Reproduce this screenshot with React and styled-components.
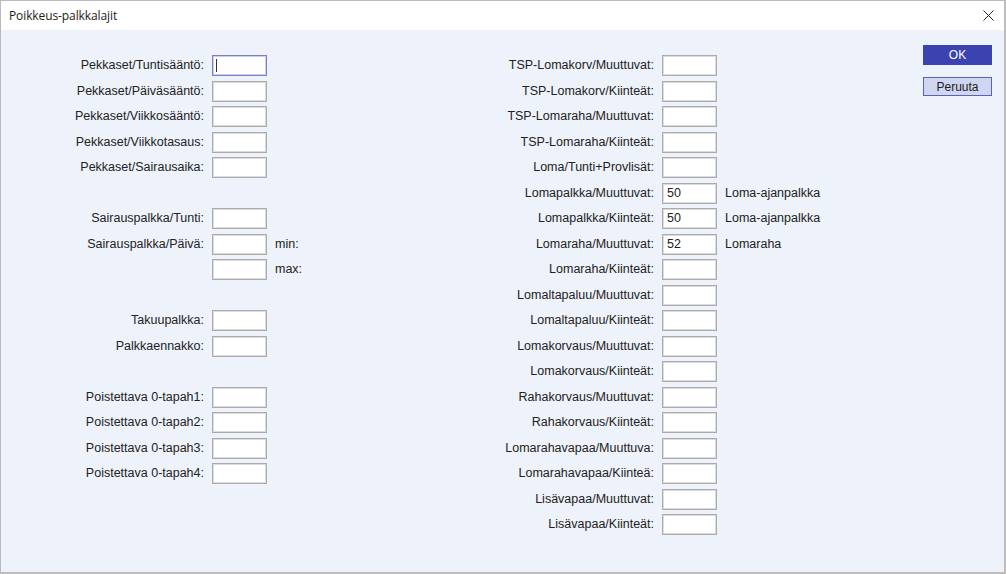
import React from "react";
import styled, { createGlobalStyle } from "styled-components";

const Global = createGlobalStyle`
  html, body { margin: 0; padding: 0; }
  body { width: 1006px; height: 574px; overflow: hidden; background: #ffffff; }
  #root { width: 1006px; height: 574px; }
`;

const Window = styled.div`
  box-sizing: border-box;
  width: 1006px;
  height: 574px;
  display: flex;
  flex-direction: column;
  border-top: 1px solid #b9b9b9;
  border-left: 1px solid #b9b9b9;
  border-right: 2px solid #bdbdbd;
  border-bottom: 2px solid #bdbdbd;
  font-family: "Liberation Sans", Arial, sans-serif;
`;

const TitleBar = styled.div`
  height: 29px;
  flex: none;
  background: #ffffff;
  display: flex;
  align-items: center;
  justify-content: space-between;
  padding: 0 9px 0 8px;
`;

const Title = styled.span`
  font-family: "Open Sans", "Noto Sans", sans-serif;
  font-size: 12px;
  color: #1b1b1b;
  letter-spacing: -0.1px;
`;

const Close = styled.button`
  border: 0;
  background: transparent;
  padding: 0;
  width: 14px;
  height: 14px;
  display: flex;
  align-items: center;
  justify-content: center;
`;

const Body = styled.div`
  flex: 1;
  background: #eef2fa;
  display: flex;
  padding-top: 25px;
`;

const Form = styled.div`
  display: grid;
  grid-template-columns: ${(p) => p.$label}px 55px auto;
  grid-auto-rows: 21px;
  row-gap: 4.5px;
  column-gap: ${(p) => p.$gap}px;
  align-content: start;
  width: ${(p) => p.$width}px;
  margin-left: ${(p) => p.$left}px;
`;

const Label = styled.label`
  grid-column: 1;
  text-align: right;
  font-size: 12.5px;
  color: #222;
  line-height: 21px;
  white-space: nowrap;
`;

const Field = styled.div`
  grid-column: 2;
  box-sizing: border-box;
  height: 21px;
  background: #ffffff;
  border: 1px solid ${(p) => (p.$focus ? "#7780c9" : "#ababab")};
  box-shadow: inset 0 0 0 1px ${(p) => (p.$focus ? "#c9cdee" : "#dcdcdc")};
  font-size: 12.5px;
  color: #222;
  line-height: 19px;
  padding-left: 4px;
  position: relative;
`;

const Caret = styled.span`
  position: absolute;
  left: 3px;
  top: 3px;
  width: 1px;
  height: 13px;
  background: #333;
`;

const Suffix = styled.span`
  grid-column: 3;
  font-size: 12.5px;
  color: #222;
  line-height: 21px;
  white-space: nowrap;
`;

const Spacer = styled.div`
  grid-column: 1 / span 3;
`;

const Buttons = styled.div`
  margin-left: auto;
  margin-right: 12px;
  display: flex;
  flex-direction: column;
  gap: 12px;
  margin-top: -10px;
`;

const Button = styled.button`
  box-sizing: border-box;
  width: 69px;
  height: ${(p) => (p.$primary ? 20 : 19)}px;
  padding: 0;
  font-family: "Liberation Sans", Arial, sans-serif;
  font-size: 12px;
  color: ${(p) => (p.$primary ? "#ffffff" : "#1b1b1b")};
  background: ${(p) => (p.$primary ? "#3a43b0" : "#cfd6f1")};
  border: 1px solid ${(p) => (p.$primary ? "#3a43b0" : "#5962b8")};
`;

const leftRows = [
  { l: "Pekkaset/Tuntisääntö:", focus: true },
  { l: "Pekkaset/Päiväsääntö:" },
  { l: "Pekkaset/Viikkosääntö:" },
  { l: "Pekkaset/Viikkotasaus:" },
  { l: "Pekkaset/Sairausaika:" },
  null,
  { l: "Sairauspalkka/Tunti:" },
  { l: "Sairauspalkka/Päivä:", s: "min:" },
  { l: "", s: "max:" },
  null,
  { l: "Takuupalkka:" },
  { l: "Palkkaennakko:" },
  null,
  { l: "Poistettava 0-tapah1:" },
  { l: "Poistettava 0-tapah2:" },
  { l: "Poistettava 0-tapah3:" },
  { l: "Poistettava 0-tapah4:" },
];

const rightRows = [
  { l: "TSP-Lomakorv/Muuttuvat:" },
  { l: "TSP-Lomakorv/Kiinteät:" },
  { l: "TSP-Lomaraha/Muuttuvat:" },
  { l: "TSP-Lomaraha/Kiinteät:" },
  { l: "Loma/Tunti+Provlisät:" },
  { l: "Lomapalkka/Muuttuvat:", v: "50", s: "Loma-ajanpalkka" },
  { l: "Lomapalkka/Kiinteät:", v: "50", s: "Loma-ajanpalkka" },
  { l: "Lomaraha/Muuttuvat:", v: "52", s: "Lomaraha" },
  { l: "Lomaraha/Kiinteät:" },
  { l: "Lomaltapaluu/Muuttuvat:" },
  { l: "Lomaltapaluu/Kiinteät:" },
  { l: "Lomakorvaus/Muuttuvat:" },
  { l: "Lomakorvaus/Kiinteät:" },
  { l: "Rahakorvaus/Muuttuvat:" },
  { l: "Rahakorvaus/Kiinteät:" },
  { l: "Lomarahavapaa/Muuttuva:" },
  { l: "Lomarahavapaa/Kiinteä:" },
  { l: "Lisävapaa/Muuttuvat:" },
  { l: "Lisävapaa/Kiinteät:" },
];

function Rows({ rows }) {
  return rows.map((r, i) =>
    r === null ? (
      <Spacer key={i} />
    ) : (
      <React.Fragment key={i}>
        <Label>{r.l}</Label>
        <Field $focus={r.focus}>
          {r.focus && <Caret />}
          {r.v}
        </Field>
        <Suffix>{r.s || ""}</Suffix>
      </React.Fragment>
    )
  );
}

export default function App() {
  return (
    <>
      <Global />
      <Window>
        <TitleBar>
          <Title>Poikkeus-palkkalajit</Title>
          <Close aria-label="Sulje">
            <svg width="11" height="11" viewBox="0 0 11 11">
              <path d="M0.5 0.5 L10.5 10.5 M10.5 0.5 L0.5 10.5" stroke="#222" strokeWidth="1" />
            </svg>
          </Close>
        </TitleBar>
        <Body>
          <Form $label={184} $gap={8} $width={420} $left={19}>
            <Rows rows={leftRows} />
          </Form>
          <Form $label={214} $gap={8} $width={340} $left={0}>
            <Rows rows={rightRows} />
          </Form>
          <Buttons>
            <Button $primary>OK</Button>
            <Button>Peruuta</Button>
          </Buttons>
        </Body>
      </Window>
    </>
  );
}
